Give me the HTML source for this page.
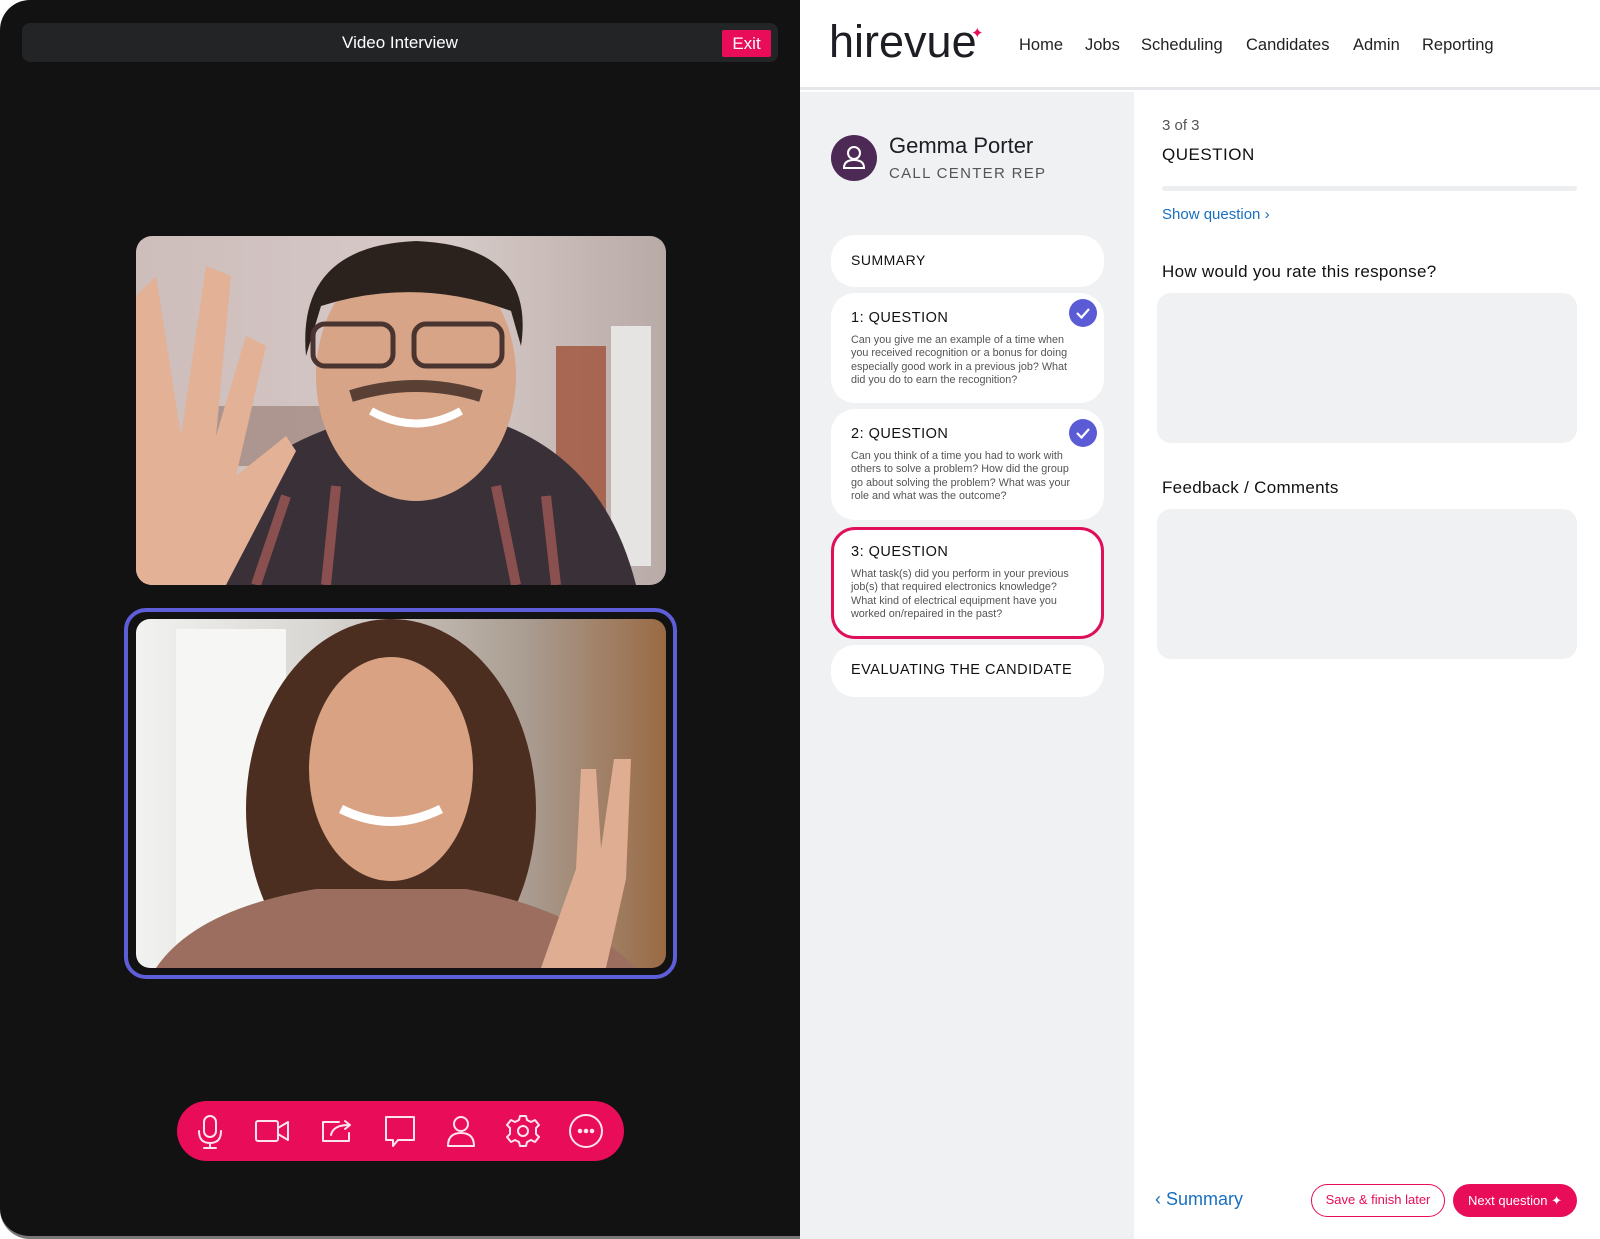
<!DOCTYPE html>
<html><head><meta charset="utf-8">
<style>
*{margin:0;padding:0;box-sizing:border-box}
body{width:1600px;height:1239px;background:#fff;font-family:"Liberation Sans",sans-serif;position:relative;overflow:hidden}
.a{position:absolute}
.dark{left:0;top:0;width:800px;height:1239px;background:#121212;border-radius:30px 0 0 30px;border-bottom:3px solid #777}
.bar{left:22px;top:23px;width:756px;height:39px;background:#232426;border-radius:8px;color:#fff;font-size:17px;text-align:center;line-height:39px}
.exit{left:722px;top:30px;width:49px;height:27px;background:#e80c59;color:#fff;font-size:17px;line-height:27px;text-align:center;border-radius:2px}
.vid{overflow:hidden;border-radius:16px}
.tool{left:177px;top:1101px;width:447px;height:60px;background:#e80c59;border-radius:30px}
.hdr{left:800px;top:0;width:800px;height:90px;background:#fff;border-bottom:3px solid #e6e7ea}
.nav{top:36px;font-size:16.5px;color:#222}
.side{left:800px;top:92px;width:334px;height:1147px;background:#f0f1f3}
.card{left:831px;width:273px;background:#fff;border-radius:24px}
.ct{position:absolute;left:20px;font-size:14.5px;color:#111;letter-spacing:.5px}
.cb{position:absolute;left:20px;width:226px;font-size:10.8px;line-height:13.3px;color:#555}
.chk{position:absolute;right:7px;top:6px;width:28px;height:28px;border-radius:50%;background:#5b5bd6}
.box{left:1157px;width:420px;height:150px;background:#f0f1f3;border-radius:14px}
</style></head><body>
<div class="a dark"></div>
<div class="a bar">Video Interview</div>
<div class="a exit">Exit</div>

<div class="a vid" style="left:136px;top:236px;width:530px;height:349px">
<svg width="530" height="349">
<defs><linearGradient id="g1" x1="0" x2="1"><stop offset="0" stop-color="#cdbdbb"/><stop offset=".6" stop-color="#d6cac8"/><stop offset="1" stop-color="#b8aaa6"/></linearGradient></defs>
<rect width="530" height="349" fill="url(#g1)"/>
<rect x="80" y="170" width="200" height="60" fill="#8a6a60" opacity=".5"/>
<rect x="420" y="110" width="50" height="200" fill="#a0533a" opacity=".8"/>
<rect x="475" y="90" width="40" height="240" fill="#e6e4e2"/>
<path d="M40 349 Q80 230 200 190 L370 190 Q470 230 500 349Z" fill="#3a3038"/>
<path d="M120 349 L150 260 M190 349 L200 250 M380 349 L360 250 M420 349 L410 260" stroke="#8a5050" stroke-width="10"/>
<ellipse cx="280" cy="140" rx="100" ry="125" fill="#d7a487"/>
<path d="M170 120 Q160 10 280 5 Q400 10 385 110 L375 75 Q280 40 185 70Z" fill="#2b221e"/>
<rect x="177" y="88" width="80" height="42" rx="12" fill="none" stroke="#4a3430" stroke-width="5"/>
<rect x="278" y="88" width="88" height="42" rx="12" fill="none" stroke="#4a3430" stroke-width="5"/>
<path d="M215 160 Q280 140 345 160" stroke="#5a4034" stroke-width="12" fill="none"/>
<path d="M235 175 Q280 200 325 175" stroke="#fff" stroke-width="8" fill="none"/>
<path d="M0 60 L20 40 L45 200 L70 30 L95 40 L80 200 L110 100 L130 110 L100 240 L150 200 L160 215 L90 349 L0 349Z" fill="#e2b196"/>
</svg></div>

<div class="a" style="left:124px;top:608px;width:553px;height:371px;border:4px solid #5d5ed8;border-radius:22px"></div>
<div class="a vid" style="left:136px;top:619px;width:530px;height:349px;border-radius:14px">
<svg width="530" height="349">
<defs><linearGradient id="g2" x1="0" x2="1"><stop offset="0" stop-color="#f2f2f0"/><stop offset=".35" stop-color="#d8d6d2"/><stop offset=".75" stop-color="#a89a8e"/><stop offset="1" stop-color="#9a6a44"/></linearGradient></defs>
<rect width="530" height="349" fill="url(#g2)"/>
<rect x="40" y="10" width="110" height="340" fill="#f6f6f5"/>
<ellipse cx="255" cy="190" rx="145" ry="190" fill="#4c2e20"/>
<path d="M20 349 Q60 290 180 270 L330 270 Q440 290 500 349Z" fill="#9c6e60"/>
<ellipse cx="255" cy="150" rx="82" ry="112" fill="#d9a283"/>
<path d="M205 190 Q255 215 305 190" stroke="#fff" stroke-width="9" fill="none"/>
<path d="M405 349 L440 250 L445 150 L460 150 L465 230 L478 140 L495 140 L490 260 L470 349Z" fill="#dfad92"/>
</svg></div>

<div class="a tool">
<svg width="447" height="60" fill="none" stroke="#fce4ec" stroke-width="2" stroke-linecap="round" stroke-linejoin="round">
<g transform="translate(33,30)"><rect x="-6" y="-15" width="12" height="21" rx="6"/><path d="M-11 0 Q-11 12 0 12 Q11 12 11 0 M0 12 V17 M-6 17 H6"/></g>
<g transform="translate(95,30)"><rect x="-16" y="-10" width="22" height="20" rx="2"/><path d="M6 -3 L16 -9 V9 L6 3"/></g>
<g transform="translate(160,30)"><path d="M2 -9 H-14 V10 H12 V2"/><path d="M-6 4 Q-4 -6 12 -6 M8 -10 L13 -6 L8 -2"/></g>
<g transform="translate(223,30)"><path d="M-14 -14 H14 V9 H-2 L-7 15 V9 H-14Z"/></g>
<g transform="translate(284,30)"><circle cx="0" cy="-7" r="7"/><path d="M-13 15 Q-13 2 0 2 Q13 2 13 15Z"/></g>
<g transform="translate(346,30)"><circle r="5"/><path d="M-3 -15 H3 L4 -11 L8 -9 L12 -11 L16 -6 L13 -3 L13 3 L16 6 L12 11 L8 9 L4 11 L3 15 H-3 L-4 11 L-8 9 L-12 11 L-16 6 L-13 3 L-13 -3 L-16 -6 L-12 -11 L-8 -9 L-4 -11Z"/></g>
<g transform="translate(409,30)"><circle r="16"/><circle cx="-6" r="1.3" fill="#fce4ec"/><circle r="1.3" fill="#fce4ec"/><circle cx="6" r="1.3" fill="#fce4ec"/></g>
</svg></div>

<div class="a hdr"></div>
<div class="a" style="left:829px;top:16px;font-size:45px;color:#1d1d24;letter-spacing:0px;font-weight:300">hirevue</div>
<div class="a" style="left:971px;top:24px;color:#e80c59;font-size:15px">✦</div>
<div class="a nav" style="left:1019px">Home</div>
<div class="a nav" style="left:1085px">Jobs</div>
<div class="a nav" style="left:1141px">Scheduling</div>
<div class="a nav" style="left:1246px">Candidates</div>
<div class="a nav" style="left:1353px">Admin</div>
<div class="a nav" style="left:1422px">Reporting</div>

<div class="a side"></div>
<div class="a" style="left:831px;top:135px;width:46px;height:46px;border-radius:50%;background:#4d2a55">
<svg width="46" height="46" fill="none" stroke="#fff" stroke-width="2"><circle cx="23" cy="18" r="6"/><path d="M13 33 Q13 25 23 25 Q33 25 33 33Z"/></svg></div>
<div class="a" style="left:889px;top:133px;font-size:22px;color:#1d1d24">Gemma Porter</div>
<div class="a" style="left:889px;top:165px;font-size:15px;color:#555;letter-spacing:1.3px">CALL CENTER REP</div>

<div class="a card" style="top:235px;height:52px"><div class="ct" style="top:17px;font-size:14px">SUMMARY</div></div>
<div class="a card" style="top:293px;height:110px"><div class="chk"><svg width="28" height="28" fill="none" stroke="#fff" stroke-width="2.2"><path d="M8 14 L12.5 18.5 L20 10"/></svg></div>
<div class="ct" style="top:17px">1: QUESTION</div><div class="cb" style="top:41px">Can you give me an example of a time when you received recognition or a bonus for doing especially good work in a previous job? What did you do to earn the recognition?</div></div>
<div class="a card" style="top:409px;height:111px"><div class="chk" style="top:10px"><svg width="28" height="28" fill="none" stroke="#fff" stroke-width="2.2"><path d="M8 14 L12.5 18.5 L20 10"/></svg></div>
<div class="ct" style="top:17px">2: QUESTION</div><div class="cb" style="top:41px">Can you think of a time you had to work with others to solve a problem? How did the group go about solving the problem? What was your role and what was the outcome?</div></div>
<div class="a card" style="top:527px;height:112px;border:3px solid #df0f5a"><div class="ct" style="top:14px;left:17px">3: QUESTION</div><div class="cb" style="top:38px;left:17px">What task(s) did you perform in your previous job(s) that required electronics knowledge? What kind of electrical equipment have you worked on/repaired in the past?</div></div>
<div class="a card" style="top:645px;height:52px"><div class="ct" style="top:17px">EVALUATING THE CANDIDATE</div></div>

<div class="a" style="left:1162px;top:117px;font-size:15px;color:#555">3 of 3</div>
<div class="a" style="left:1162px;top:145px;font-size:17px;color:#111;letter-spacing:.5px">QUESTION</div>
<div class="a" style="left:1162px;top:186px;width:415px;height:5px;background:#eceef0;border-radius:3px"></div>
<div class="a" style="left:1162px;top:206px;font-size:15px;color:#1a6fc0">Show question ›</div>
<div class="a" style="left:1162px;top:262px;font-size:17px;color:#111;letter-spacing:.3px">How would you rate this response?</div>
<div class="a box" style="top:293px"></div>
<div class="a" style="left:1162px;top:478px;font-size:17px;color:#111;letter-spacing:.3px">Feedback / Comments</div>
<div class="a box" style="top:509px"></div>

<div class="a" style="left:1155px;top:1189px;font-size:18px;color:#1a6fc0">‹ Summary</div>
<div class="a" style="left:1311px;top:1184px;width:134px;height:33px;border:1.5px solid #e80c59;border-radius:17px;color:#e80c59;font-size:13px;text-align:center;line-height:30px">Save &amp; finish later</div>
<div class="a" style="left:1453px;top:1184px;width:124px;height:33px;background:#e80c59;border-radius:17px;color:#fff;font-size:13px;text-align:center;line-height:33px">Next question ✦</div>
</body></html>
